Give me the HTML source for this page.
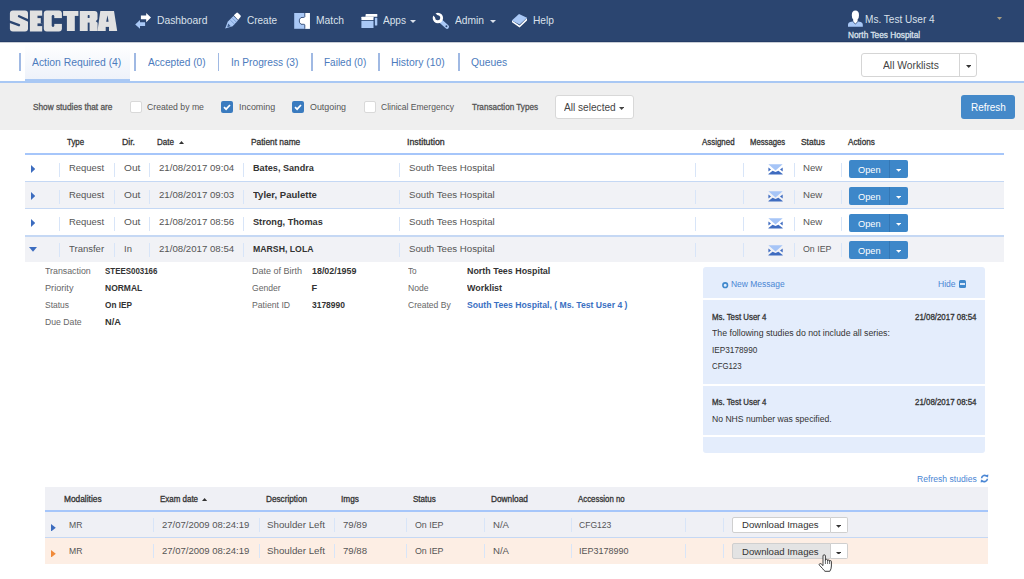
<!DOCTYPE html>
<html><head><meta charset="utf-8"><style>
html,body{margin:0;padding:0;width:1024px;height:579px;overflow:hidden;background:#fff;position:relative;font-family:"Liberation Sans",sans-serif}
div{position:absolute}
.t{white-space:nowrap;line-height:1}
</style></head><body>
<div style="left:0px;top:0px;width:1024px;height:41px;background:#2b4570"></div>
<div style="left:0px;top:41px;width:1024px;height:1px;background:#243b66"></div>
<div style="left:0px;top:42px;width:1024px;height:1px;background:#c9ced6"></div>
<svg style="position:absolute;left:0;top:0" width="130" height="42" viewBox="0 0 130 42"><rect x="9.9" y="10.5" width="18.1" height="21" rx="3" fill="#e1e1e1"/><path d="M19 16.2 L28.6 20.6" stroke="#2b4570" stroke-width="2.3" stroke-linecap="round"/><path d="M28.6 20.6 L30 21.2" stroke="#2b4570" stroke-width="2.3"/><path d="M19 25.2 L9.4 21.6" stroke="#2b4570" stroke-width="2.3" stroke-linecap="round"/><path d="M9.4 21.6 L8 21.1" stroke="#2b4570" stroke-width="2.3"/><rect x="29.9" y="10.5" width="12.3" height="21" fill="#e1e1e1"/><rect x="37.5" y="15.7" width="5" height="2.4" fill="#2b4570"/><rect x="37.5" y="23.4" width="5" height="2.7" fill="#2b4570"/><rect x="40.8" y="18" width="2" height="5.5" fill="#2b4570"/><rect x="43.8" y="10.5" width="18.1" height="21" rx="3" fill="#e1e1e1"/><rect x="51.7" y="15.1" width="2.6" height="11.8" rx="1.3" fill="#2b4570"/><rect x="53" y="18.1" width="9.5" height="5.8" fill="#2b4570"/><rect x="63.1" y="11" width="15.3" height="4.9" fill="#e1e1e1"/><rect x="66.9" y="11" width="7.9" height="20" fill="#e1e1e1"/><path d="M79.8 11 H94.5 Q97.5 11 97.5 14 V19.2 L95.8 21.2 L97.6 22.8 V31 H79.8 Z" fill="#e1e1e1"/><rect x="87.7" y="15.1" width="1.9" height="3" rx="0.6" fill="#2b4570"/><rect x="87.7" y="22.6" width="1.9" height="8.6" fill="#2b4570"/><path d="M100.3 11 H114 L117.2 31 H97.5 Z" fill="#e1e1e1"/><path d="M106.2 21.7 H108.6 L107.5 15.3 Z" fill="#2b4570"/><rect x="105.7" y="26.9" width="3.3" height="4.3" fill="#2b4570"/></svg>
<div class="t" style="left:157.3px;top:16px;font-size:10.3px;color:#dae1eb;font-weight:normal;transform:scaleX(1.0022);transform-origin:0 0;">Dashboard</div>
<div class="t" style="left:246.9px;top:16px;font-size:10.3px;color:#dae1eb;font-weight:normal;transform:scaleX(0.9704);transform-origin:0 0;">Create</div>
<div class="t" style="left:316px;top:16px;font-size:10.3px;color:#dae1eb;font-weight:normal;transform:scaleX(0.9983);transform-origin:0 0;">Match</div>
<div class="t" style="left:383px;top:16px;font-size:10.3px;color:#dae1eb;font-weight:normal;transform:scaleX(0.9797);transform-origin:0 0;">Apps</div>
<div class="t" style="left:455px;top:16px;font-size:10.3px;color:#dae1eb;font-weight:normal;transform:scaleX(0.9933);transform-origin:0 0;">Admin</div>
<div class="t" style="left:533px;top:16px;font-size:10.3px;color:#dae1eb;font-weight:normal;transform:scaleX(0.9913);transform-origin:0 0;">Help</div>
<svg style="position:absolute;left:410px;top:20px" width="6" height="3" viewBox="0 0 6 3"><path d="M0 0 L6 0 L3.0 3 Z" fill="#dae1eb"/></svg>
<svg style="position:absolute;left:489.5px;top:20px" width="6" height="3" viewBox="0 0 6 3"><path d="M0 0 L6 0 L3.0 3 Z" fill="#dae1eb"/></svg>
<svg style="position:absolute;left:132px;top:10px" width="24" height="22" viewBox="0 0 24 22"><path d="M8.9 5.5 H14.2 V3 L19 7.6 L14.2 12.2 V9.3 H8.9 Z" fill="#ffffff"/><path d="M13.1 12.2 H8 V9.9 L3.2 14.4 L8 18.8 V16 H13.1 Z" fill="#a9c8f6"/></svg>
<svg style="position:absolute;left:222px;top:10px" width="24" height="22" viewBox="0 0 24 22"><path d="M11.4 6.1 L16 10.4 L10.6 16.3 L3.2 18.6 L5.7 11.8 Z" fill="#a9c8f6"/><path d="M11.8 5.3 L14.6 2.8 Q15.3 2.3 16 2.9 L18.6 5.6 Q19.2 6.4 18.5 7.1 L16.1 10 Z" fill="#ffffff"/><path d="M8.3 10.1 L12.6 14.2 M10.4 8.2 L14.4 12.2" stroke="#5a7fb8" stroke-width="0.6"/><path d="M6.2 13.6 L8.8 16.2 L5.2 17.2 Z" fill="#3f5f90"/></svg>
<svg style="position:absolute;left:290px;top:10px" width="24" height="22" viewBox="0 0 24 22"><rect x="4.2" y="3" width="15.7" height="15.8" fill="#a9c8f6"/><path d="M14.8 3 H19.9 V18.8 H14.8 V14.8 Q14.5 14 13.2 14.3 Q10.5 15 9.6 12.6 Q9 11 9.6 9.2 Q10.5 6.8 13.2 7.4 Q14.5 7.6 14.8 6.8 Z" fill="#ffffff"/><path d="M14.8 3 V6.8 Q14.5 7.6 13.2 7.4 Q10.5 6.8 9.6 9.2 Q9 11 9.6 12.6 Q10.5 15 13.2 14.3 Q14.5 14 14.8 14.8 V18.8" stroke="#2b4570" stroke-width="0.9" fill="none"/></svg>
<svg style="position:absolute;left:357px;top:10px" width="24" height="22" viewBox="0 0 24 22"><path d="M8.8 4 H19.8 Q20.3 4 20.3 4.5 V6.8 H8.4 Z" fill="#ffffff"/><rect x="17.9" y="7.8" width="2.4" height="7.8" rx="0.6" fill="#a9c8f6"/><rect x="4.4" y="6.8" width="12.1" height="3.1" rx="0.5" fill="#ffffff"/><rect x="4.4" y="10.8" width="12.1" height="7.2" fill="#a9c8f6"/></svg>
<svg style="position:absolute;left:428px;top:10px" width="24" height="22" viewBox="0 0 24 22"><path d="M13.4 11.8 L19 16.8" stroke="#a9c8f6" stroke-width="4" stroke-linecap="round"/><circle cx="18.4" cy="16.2" r="0.95" fill="#2b4570"/><circle cx="9.9" cy="8" r="5.2" fill="#ffffff"/><circle cx="9.7" cy="7.8" r="2.5" fill="#2b4570"/><path d="M9.7 7.8 L5.2 3.2" stroke="#2b4570" stroke-width="3.2"/></svg>
<svg style="position:absolute;left:508px;top:10px" width="24" height="22" viewBox="0 0 24 22"><path d="M4 12.3 L11.6 17.6 L19 10.4 V8 L11.6 15.4 L4 10.6 Z" fill="#ffffff"/><path d="M3.8 10.4 L11 4 L19 7.8 L11.6 14.4 Z" fill="#a9c8f6"/></svg>
<svg style="position:absolute;left:844px;top:8px" width="24" height="22" viewBox="0 0 24 22"><path d="M4 18.8 V16.4 Q4 14.6 6 14 L8.6 13.4 L11.4 16.6 L14.2 13.4 L16.8 14 Q18.8 14.6 18.8 16.4 V18.8 Z" fill="#a9c8f6"/><path d="M11.4 2.6 Q15 2.6 15 7.2 Q15 10.4 13.6 11.6 V13.2 L11.4 15.8 L9.2 13.2 V11.6 Q7.8 10.4 7.8 7.2 Q7.8 2.6 11.4 2.6 Z" fill="#ffffff"/></svg>
<div class="t" style="left:865px;top:15px;font-size:10.3px;color:#dae1eb;font-weight:normal;transform:scaleX(0.9768);transform-origin:0 0;">Ms. Test User 4</div>
<div class="t" style="left:847.5px;top:32px;font-size:8.2px;color:#dae1eb;font-weight:normal;transform:scaleX(1.0111);transform-origin:0 0;-webkit-text-stroke:0.3px #dae1eb;">North Tees Hospital</div>
<svg style="position:absolute;left:997px;top:17px" width="5" height="3" viewBox="0 0 5 3"><path d="M0 0 L5 0 L2.5 3 Z" fill="#a89c80"/></svg>
<div style="left:25px;top:43px;width:105px;height:36px;background:linear-gradient(#fff,#eef2fa)"></div>
<div style="left:0px;top:81px;width:1024px;height:2px;background:#a9c8f4"></div>
<div style="left:25px;top:79px;width:105px;height:2px;background:#a9c8f4"></div>
<div class="t" style="left:32.3px;top:58px;font-size:10.4px;color:#4c7bbd;font-weight:normal;transform:scaleX(0.9978);transform-origin:0 0;">Action Required (4)</div>
<div class="t" style="left:147.6px;top:58px;font-size:10.4px;color:#4c7bbd;font-weight:normal;transform:scaleX(0.9769);transform-origin:0 0;">Accepted (0)</div>
<div class="t" style="left:230.6px;top:58px;font-size:10.4px;color:#4c7bbd;font-weight:normal;transform:scaleX(0.9800);transform-origin:0 0;">In Progress (3)</div>
<div class="t" style="left:323.7px;top:58px;font-size:10.4px;color:#4c7bbd;font-weight:normal;transform:scaleX(0.9630);transform-origin:0 0;">Failed (0)</div>
<div class="t" style="left:391.4px;top:58px;font-size:10.4px;color:#4c7bbd;font-weight:normal;transform:scaleX(1.0011);transform-origin:0 0;">History (10)</div>
<div class="t" style="left:470.7px;top:58px;font-size:10.4px;color:#4c7bbd;font-weight:normal;transform:scaleX(0.9938);transform-origin:0 0;">Queues</div>
<div style="left:19px;top:53px;width:1.6px;height:17.5px;background:#a0b9e3"></div>
<div style="left:134px;top:53px;width:1.6px;height:17.5px;background:#a0b9e3"></div>
<div style="left:217.5px;top:53px;width:1.6px;height:17.5px;background:#a0b9e3"></div>
<div style="left:311px;top:53px;width:1.6px;height:17.5px;background:#a0b9e3"></div>
<div style="left:378px;top:53px;width:1.6px;height:17.5px;background:#a0b9e3"></div>
<div style="left:458px;top:53px;width:1.6px;height:17.5px;background:#a0b9e3"></div>
<div style="left:861px;top:53px;width:116px;height:24px;background:#fff;border:1px solid #d5d5d5;border-radius:3px;box-sizing:border-box"></div>
<div style="left:959px;top:54px;width:1px;height:22px;background:#d5d5d5"></div>
<div class="t" style="left:882.6px;top:61px;font-size:10.3px;color:#444;font-weight:normal;transform:scaleX(0.9984);transform-origin:0 0;">All Worklists</div>
<svg style="position:absolute;left:965.5px;top:64.5px" width="5.5" height="3" viewBox="0 0 5.5 3"><path d="M0 0 L5.5 0 L2.75 3 Z" fill="#333"/></svg>
<div style="left:0px;top:83px;width:1024px;height:47px;background:#efefef"></div>
<div class="t" style="left:32.9px;top:103px;font-size:8.7px;color:#555;font-weight:normal;transform:scaleX(0.9502);transform-origin:0 0;-webkit-text-stroke:0.3px #555;">Show studies that are</div>
<div style="left:130px;top:101px;width:12px;height:12px;background:#fff;border:1px solid #d9d9d9;border-radius:2px;box-sizing:border-box"></div>
<div style="left:221px;top:101px;width:12px;height:12px;background:#3a7bbf;border-radius:2px"><svg width="12" height="12" viewBox="0 0 12 12" style="position:absolute;left:0;top:0"><path d="M3 6.2 L5.1 8.2 L9 4" stroke="#fff" stroke-width="1.7" fill="none"/></svg></div>
<div style="left:292px;top:101px;width:12px;height:12px;background:#3a7bbf;border-radius:2px"><svg width="12" height="12" viewBox="0 0 12 12" style="position:absolute;left:0;top:0"><path d="M3 6.2 L5.1 8.2 L9 4" stroke="#fff" stroke-width="1.7" fill="none"/></svg></div>
<div style="left:364px;top:101px;width:12px;height:12px;background:#fff;border:1px solid #d9d9d9;border-radius:2px;box-sizing:border-box"></div>
<div class="t" style="left:147.2px;top:102px;font-size:9.4px;color:#555;font-weight:normal;transform:scaleX(0.9262);transform-origin:0 0;">Created by me</div>
<div class="t" style="left:239.2px;top:102px;font-size:9.4px;color:#555;font-weight:normal;transform:scaleX(0.9517);transform-origin:0 0;">Incoming</div>
<div class="t" style="left:310.3px;top:102px;font-size:9.4px;color:#555;font-weight:normal;transform:scaleX(0.9462);transform-origin:0 0;">Outgoing</div>
<div class="t" style="left:381.4px;top:102px;font-size:9.4px;color:#555;font-weight:normal;transform:scaleX(0.9086);transform-origin:0 0;">Clinical Emergency</div>
<div class="t" style="left:471.9px;top:103px;font-size:8.7px;color:#555;font-weight:normal;transform:scaleX(0.9362);transform-origin:0 0;-webkit-text-stroke:0.3px #555;">Transaction Types</div>
<div style="left:555px;top:95px;width:79px;height:24px;background:#fff;border:1px solid #d8d8d8;border-radius:3px;box-sizing:border-box"></div>
<div class="t" style="left:564px;top:103px;font-size:10.3px;color:#444;font-weight:normal;transform:scaleX(0.9815);transform-origin:0 0;">All selected</div>
<svg style="position:absolute;left:619px;top:106.5px" width="5.3" height="3" viewBox="0 0 5.3 3"><path d="M0 0 L5.3 0 L2.65 3 Z" fill="#444"/></svg>
<div style="left:961px;top:95px;width:54px;height:24px;background:#4489c9;border-radius:3px"></div>
<div class="t" style="left:970.6px;top:103px;font-size:10.3px;color:#fff;font-weight:normal;transform:scaleX(0.9677);transform-origin:0 0;">Refresh</div>
<div class="t" style="left:67.2px;top:138px;font-size:8.7px;color:#333;font-weight:normal;transform:scaleX(0.9066);transform-origin:0 0;-webkit-text-stroke:0.3px #333;">Type</div>
<div class="t" style="left:122px;top:138px;font-size:8.7px;color:#333;font-weight:normal;transform:scaleX(0.9962);transform-origin:0 0;-webkit-text-stroke:0.3px #333;">Dir.</div>
<div class="t" style="left:156.8px;top:138px;font-size:8.7px;color:#333;font-weight:normal;transform:scaleX(0.9251);transform-origin:0 0;-webkit-text-stroke:0.3px #333;">Date</div>
<svg style="position:absolute;left:179px;top:141px" width="5" height="3" viewBox="0 0 5 3"><path d="M0 3 L2.5 0 L5 3 Z" fill="#333"/></svg>
<div class="t" style="left:250.7px;top:138px;font-size:8.7px;color:#333;font-weight:normal;transform:scaleX(0.9617);transform-origin:0 0;-webkit-text-stroke:0.3px #333;">Patient name</div>
<div class="t" style="left:407.2px;top:138px;font-size:8.7px;color:#333;font-weight:normal;transform:scaleX(1.0151);transform-origin:0 0;-webkit-text-stroke:0.3px #333;">Institution</div>
<div class="t" style="left:702.2px;top:138px;font-size:8.7px;color:#333;font-weight:normal;transform:scaleX(0.9109);transform-origin:0 0;-webkit-text-stroke:0.3px #333;">Assigned</div>
<div class="t" style="left:750.4px;top:138px;font-size:8.7px;color:#333;font-weight:normal;transform:scaleX(0.8877);transform-origin:0 0;-webkit-text-stroke:0.3px #333;">Messages</div>
<div class="t" style="left:800.5px;top:138px;font-size:8.7px;color:#333;font-weight:normal;transform:scaleX(0.9690);transform-origin:0 0;-webkit-text-stroke:0.3px #333;">Status</div>
<div class="t" style="left:848.3px;top:138px;font-size:8.7px;color:#333;font-weight:normal;transform:scaleX(0.9429);transform-origin:0 0;-webkit-text-stroke:0.3px #333;">Actions</div>
<div style="left:25px;top:153px;width:979px;height:2px;background:#a6c6fa"></div>
<div style="left:25px;top:155px;width:979px;height:26px;background:#fff"></div>
<div style="left:25px;top:181px;width:979px;height:1px;background:#c5d8f4"></div>
<svg style="position:absolute;left:31px;top:164.5px" width="4.2" height="8" viewBox="0 0 4.2 8"><path d="M0 0 L4.2 4.0 L0 8 Z" fill="#3c6cbf"/></svg>
<div style="left:59px;top:162.5px;width:1px;height:14px;background:#d8e5f8"></div>
<div style="left:114px;top:162.5px;width:1px;height:14px;background:#d8e5f8"></div>
<div style="left:149px;top:162.5px;width:1px;height:14px;background:#d8e5f8"></div>
<div style="left:243px;top:162.5px;width:1px;height:14px;background:#d8e5f8"></div>
<div style="left:399px;top:162.5px;width:1px;height:14px;background:#d8e5f8"></div>
<div style="left:695px;top:162.5px;width:1px;height:14px;background:#d8e5f8"></div>
<div style="left:742.5px;top:162.5px;width:1px;height:14px;background:#d8e5f8"></div>
<div style="left:793.5px;top:162.5px;width:1px;height:14px;background:#d8e5f8"></div>
<div style="left:841px;top:162.5px;width:1px;height:14px;background:#d8e5f8"></div>
<div class="t" style="left:68.75px;top:163px;font-size:9.6px;color:#555;font-weight:normal;transform:scaleX(0.9858);transform-origin:0 0;">Request</div>
<div class="t" style="left:123.6px;top:163px;font-size:9.6px;color:#555;font-weight:normal;transform:scaleX(1.0599);transform-origin:0 0;">Out</div>
<div class="t" style="left:158.6px;top:163px;font-size:9.6px;color:#555;font-weight:normal;transform:scaleX(1.0062);transform-origin:0 0;">21/08/2017 09:04</div>
<div class="t" style="left:252.9px;top:164px;font-size:9.2px;color:#333;font-weight:bold;transform:scaleX(0.9941);transform-origin:0 0;">Bates, Sandra</div>
<div class="t" style="left:408.75px;top:163px;font-size:9.6px;color:#555;font-weight:normal;transform:scaleX(1.0069);transform-origin:0 0;">South Tees Hospital</div>
<div class="t" style="left:802.8px;top:163px;font-size:9.6px;color:#555;font-weight:normal;transform:scaleX(1.0050);transform-origin:0 0;">New</div>
<svg style="position:absolute;left:767.5px;top:163.5px" width="15" height="11" viewBox="0 0 15 11"><path d="M0.4 0.2 H14.7 L7.5 6.4 Z" fill="#a6c5f7"/><path d="M0.4 3.5 L3 5.5 L0.4 7.4 Z M14.7 3.5 L12 5.5 L14.7 7.4 Z" fill="#3f6cc0"/><path d="M0.4 9.9 L4.6 6.75 L7.5 7.9 L10.4 6.75 L14.7 9.9 V10.6 H0.4 Z" fill="#3f6cc0"/></svg>
<div style="left:848.5px;top:159.5px;width:59px;height:18px;background:#3d87c9;border-radius:2px"></div>
<div style="left:889px;top:159.5px;width:1px;height:18px;background:#3477b5"></div>
<div class="t" style="left:857.8px;top:165px;font-size:9.6px;color:#fff;font-weight:normal;transform:scaleX(0.9623);transform-origin:0 0;">Open</div>
<svg style="position:absolute;left:896px;top:169.0px" width="5.3" height="2.8" viewBox="0 0 5.3 2.8"><path d="M0 0 L5.3 0 L2.65 2.8 Z" fill="#fff"/></svg>
<div style="left:25px;top:182px;width:979px;height:26px;background:#f1f2f6"></div>
<div style="left:25px;top:208px;width:979px;height:1px;background:#c5d8f4"></div>
<svg style="position:absolute;left:31px;top:191.5px" width="4.2" height="8" viewBox="0 0 4.2 8"><path d="M0 0 L4.2 4.0 L0 8 Z" fill="#3c6cbf"/></svg>
<div style="left:59px;top:189.5px;width:1px;height:14px;background:#d8e5f8"></div>
<div style="left:114px;top:189.5px;width:1px;height:14px;background:#d8e5f8"></div>
<div style="left:149px;top:189.5px;width:1px;height:14px;background:#d8e5f8"></div>
<div style="left:243px;top:189.5px;width:1px;height:14px;background:#d8e5f8"></div>
<div style="left:399px;top:189.5px;width:1px;height:14px;background:#d8e5f8"></div>
<div style="left:695px;top:189.5px;width:1px;height:14px;background:#d8e5f8"></div>
<div style="left:742.5px;top:189.5px;width:1px;height:14px;background:#d8e5f8"></div>
<div style="left:793.5px;top:189.5px;width:1px;height:14px;background:#d8e5f8"></div>
<div style="left:841px;top:189.5px;width:1px;height:14px;background:#d8e5f8"></div>
<div class="t" style="left:68.75px;top:190px;font-size:9.6px;color:#555;font-weight:normal;transform:scaleX(0.9858);transform-origin:0 0;">Request</div>
<div class="t" style="left:123.6px;top:190px;font-size:9.6px;color:#555;font-weight:normal;transform:scaleX(1.0599);transform-origin:0 0;">Out</div>
<div class="t" style="left:158.6px;top:190px;font-size:9.6px;color:#555;font-weight:normal;transform:scaleX(1.0062);transform-origin:0 0;">21/08/2017 09:03</div>
<div class="t" style="left:252.9px;top:191px;font-size:9.2px;color:#333;font-weight:bold;transform:scaleX(1.0373);transform-origin:0 0;">Tyler, Paulette</div>
<div class="t" style="left:408.75px;top:190px;font-size:9.6px;color:#555;font-weight:normal;transform:scaleX(1.0069);transform-origin:0 0;">South Tees Hospital</div>
<div class="t" style="left:802.8px;top:190px;font-size:9.6px;color:#555;font-weight:normal;transform:scaleX(1.0050);transform-origin:0 0;">New</div>
<svg style="position:absolute;left:767.5px;top:190.5px" width="15" height="11" viewBox="0 0 15 11"><path d="M0.4 0.2 H14.7 L7.5 6.4 Z" fill="#a6c5f7"/><path d="M0.4 3.5 L3 5.5 L0.4 7.4 Z M14.7 3.5 L12 5.5 L14.7 7.4 Z" fill="#3f6cc0"/><path d="M0.4 9.9 L4.6 6.75 L7.5 7.9 L10.4 6.75 L14.7 9.9 V10.6 H0.4 Z" fill="#3f6cc0"/></svg>
<div style="left:848.5px;top:186.5px;width:59px;height:18px;background:#3d87c9;border-radius:2px"></div>
<div style="left:889px;top:186.5px;width:1px;height:18px;background:#3477b5"></div>
<div class="t" style="left:857.8px;top:192px;font-size:9.6px;color:#fff;font-weight:normal;transform:scaleX(0.9623);transform-origin:0 0;">Open</div>
<svg style="position:absolute;left:896px;top:196.0px" width="5.3" height="2.8" viewBox="0 0 5.3 2.8"><path d="M0 0 L5.3 0 L2.65 2.8 Z" fill="#fff"/></svg>
<div style="left:25px;top:209px;width:979px;height:26px;background:#fff"></div>
<div style="left:25px;top:235px;width:979px;height:2px;background:#c5d8f4"></div>
<svg style="position:absolute;left:31px;top:218.5px" width="4.2" height="8" viewBox="0 0 4.2 8"><path d="M0 0 L4.2 4.0 L0 8 Z" fill="#3c6cbf"/></svg>
<div style="left:59px;top:216.5px;width:1px;height:14px;background:#d8e5f8"></div>
<div style="left:114px;top:216.5px;width:1px;height:14px;background:#d8e5f8"></div>
<div style="left:149px;top:216.5px;width:1px;height:14px;background:#d8e5f8"></div>
<div style="left:243px;top:216.5px;width:1px;height:14px;background:#d8e5f8"></div>
<div style="left:399px;top:216.5px;width:1px;height:14px;background:#d8e5f8"></div>
<div style="left:695px;top:216.5px;width:1px;height:14px;background:#d8e5f8"></div>
<div style="left:742.5px;top:216.5px;width:1px;height:14px;background:#d8e5f8"></div>
<div style="left:793.5px;top:216.5px;width:1px;height:14px;background:#d8e5f8"></div>
<div style="left:841px;top:216.5px;width:1px;height:14px;background:#d8e5f8"></div>
<div class="t" style="left:68.75px;top:217px;font-size:9.6px;color:#555;font-weight:normal;transform:scaleX(0.9858);transform-origin:0 0;">Request</div>
<div class="t" style="left:123.6px;top:217px;font-size:9.6px;color:#555;font-weight:normal;transform:scaleX(1.0599);transform-origin:0 0;">Out</div>
<div class="t" style="left:158.6px;top:217px;font-size:9.6px;color:#555;font-weight:normal;transform:scaleX(1.0062);transform-origin:0 0;">21/08/2017 08:56</div>
<div class="t" style="left:252.9px;top:218px;font-size:9.2px;color:#333;font-weight:bold;transform:scaleX(0.9982);transform-origin:0 0;">Strong, Thomas</div>
<div class="t" style="left:408.75px;top:217px;font-size:9.6px;color:#555;font-weight:normal;transform:scaleX(1.0069);transform-origin:0 0;">South Tees Hospital</div>
<div class="t" style="left:802.8px;top:217px;font-size:9.6px;color:#555;font-weight:normal;transform:scaleX(1.0050);transform-origin:0 0;">New</div>
<svg style="position:absolute;left:767.5px;top:217.5px" width="15" height="11" viewBox="0 0 15 11"><path d="M0.4 0.2 H14.7 L7.5 6.4 Z" fill="#a6c5f7"/><path d="M0.4 3.5 L3 5.5 L0.4 7.4 Z M14.7 3.5 L12 5.5 L14.7 7.4 Z" fill="#3f6cc0"/><path d="M0.4 9.9 L4.6 6.75 L7.5 7.9 L10.4 6.75 L14.7 9.9 V10.6 H0.4 Z" fill="#3f6cc0"/></svg>
<div style="left:848.5px;top:213.5px;width:59px;height:18px;background:#3d87c9;border-radius:2px"></div>
<div style="left:889px;top:213.5px;width:1px;height:18px;background:#3477b5"></div>
<div class="t" style="left:857.8px;top:219px;font-size:9.6px;color:#fff;font-weight:normal;transform:scaleX(0.9623);transform-origin:0 0;">Open</div>
<svg style="position:absolute;left:896px;top:223.0px" width="5.3" height="2.8" viewBox="0 0 5.3 2.8"><path d="M0 0 L5.3 0 L2.65 2.8 Z" fill="#fff"/></svg>
<div style="left:25px;top:237px;width:979px;height:25px;background:#f1f2f6"></div>
<svg style="position:absolute;left:29px;top:247px" width="8" height="4.8" viewBox="0 0 8 4.8"><path d="M0 0 L8 0 L4.0 4.8 Z" fill="#3c6cbf"/></svg>
<div style="left:59px;top:243px;width:1px;height:14px;background:#d8e5f8"></div>
<div style="left:114px;top:243px;width:1px;height:14px;background:#d8e5f8"></div>
<div style="left:149px;top:243px;width:1px;height:14px;background:#d8e5f8"></div>
<div style="left:243px;top:243px;width:1px;height:14px;background:#d8e5f8"></div>
<div style="left:399px;top:243px;width:1px;height:14px;background:#d8e5f8"></div>
<div style="left:695px;top:243px;width:1px;height:14px;background:#d8e5f8"></div>
<div style="left:742.5px;top:243px;width:1px;height:14px;background:#d8e5f8"></div>
<div style="left:793.5px;top:243px;width:1px;height:14px;background:#d8e5f8"></div>
<div style="left:841px;top:243px;width:1px;height:14px;background:#d8e5f8"></div>
<div class="t" style="left:69.2px;top:244px;font-size:9.6px;color:#555;font-weight:normal;transform:scaleX(0.9919);transform-origin:0 0;">Transfer</div>
<div class="t" style="left:123.6px;top:244px;font-size:9.6px;color:#555;font-weight:normal;transform:scaleX(0.9867);transform-origin:0 0;">In</div>
<div class="t" style="left:158.6px;top:244px;font-size:9.6px;color:#555;font-weight:normal;transform:scaleX(1.0062);transform-origin:0 0;">21/08/2017 08:54</div>
<div class="t" style="left:252.9px;top:245px;font-size:9.2px;color:#333;font-weight:bold;transform:scaleX(0.9486);transform-origin:0 0;">MARSH, LOLA</div>
<div class="t" style="left:408.75px;top:244px;font-size:9.6px;color:#555;font-weight:normal;transform:scaleX(1.0069);transform-origin:0 0;">South Tees Hospital</div>
<div class="t" style="left:802.8px;top:244px;font-size:9.6px;color:#555;font-weight:normal;transform:scaleX(0.9177);transform-origin:0 0;">On IEP</div>
<svg style="position:absolute;left:767.5px;top:244.5px" width="15" height="11" viewBox="0 0 15 11"><path d="M0.4 0.2 H14.7 L7.5 6.4 Z" fill="#a6c5f7"/><path d="M0.4 3.5 L3 5.5 L0.4 7.4 Z M14.7 3.5 L12 5.5 L14.7 7.4 Z" fill="#3f6cc0"/><path d="M0.4 9.9 L4.6 6.75 L7.5 7.9 L10.4 6.75 L14.7 9.9 V10.6 H0.4 Z" fill="#3f6cc0"/></svg>
<div style="left:848.5px;top:240.5px;width:59px;height:18px;background:#3d87c9;border-radius:2px"></div>
<div style="left:889px;top:240.5px;width:1px;height:18px;background:#3477b5"></div>
<div class="t" style="left:857.8px;top:246px;font-size:9.6px;color:#fff;font-weight:normal;transform:scaleX(0.9623);transform-origin:0 0;">Open</div>
<svg style="position:absolute;left:896px;top:250.0px" width="5.3" height="2.8" viewBox="0 0 5.3 2.8"><path d="M0 0 L5.3 0 L2.65 2.8 Z" fill="#fff"/></svg>
<div class="t" style="left:45.3px;top:267px;font-size:9.2px;color:#666;font-weight:normal;transform:scaleX(0.9597);transform-origin:0 0;">Transaction</div>
<div class="t" style="left:104.7px;top:267px;font-size:9.2px;color:#333;font-weight:bold;transform:scaleX(0.8626);transform-origin:0 0;">STEES003166</div>
<div class="t" style="left:45.3px;top:284px;font-size:9.2px;color:#666;font-weight:normal;transform:scaleX(0.9957);transform-origin:0 0;">Priority</div>
<div class="t" style="left:104.7px;top:284px;font-size:9.2px;color:#333;font-weight:bold;transform:scaleX(0.9239);transform-origin:0 0;">NORMAL</div>
<div class="t" style="left:45.3px;top:301px;font-size:9.2px;color:#666;font-weight:normal;transform:scaleX(0.9240);transform-origin:0 0;">Status</div>
<div class="t" style="left:104.7px;top:301px;font-size:9.2px;color:#333;font-weight:bold;transform:scaleX(0.8952);transform-origin:0 0;">On IEP</div>
<div class="t" style="left:45.3px;top:318px;font-size:9.2px;color:#666;font-weight:normal;transform:scaleX(0.9443);transform-origin:0 0;">Due Date</div>
<div class="t" style="left:104.7px;top:318px;font-size:9.2px;color:#333;font-weight:bold;transform:scaleX(1.0035);transform-origin:0 0;">N/A</div>
<div class="t" style="left:252px;top:267px;font-size:9.2px;color:#666;font-weight:normal;transform:scaleX(0.9798);transform-origin:0 0;">Date of Birth</div>
<div class="t" style="left:311.6px;top:267px;font-size:9.2px;color:#333;font-weight:bold;transform:scaleX(0.9664);transform-origin:0 0;">18/02/1959</div>
<div class="t" style="left:252px;top:284px;font-size:9.2px;color:#666;font-weight:normal;transform:scaleX(0.9353);transform-origin:0 0;">Gender</div>
<div class="t" style="left:311.6px;top:284px;font-size:9.2px;color:#333;font-weight:bold;">F</div>
<div class="t" style="left:252px;top:301px;font-size:9.2px;color:#666;font-weight:normal;transform:scaleX(0.9431);transform-origin:0 0;">Patient ID</div>
<div class="t" style="left:311.6px;top:301px;font-size:9.2px;color:#333;font-weight:bold;transform:scaleX(0.9214);transform-origin:0 0;">3178990</div>
<div class="t" style="left:408.2px;top:267px;font-size:9.2px;color:#666;font-weight:normal;transform:scaleX(0.8954);transform-origin:0 0;">To</div>
<div class="t" style="left:467.3px;top:267px;font-size:9.2px;color:#333;font-weight:bold;transform:scaleX(0.9673);transform-origin:0 0;">North Tees Hospital</div>
<div class="t" style="left:408.2px;top:284px;font-size:9.2px;color:#666;font-weight:normal;transform:scaleX(0.9366);transform-origin:0 0;">Node</div>
<div class="t" style="left:467.3px;top:284px;font-size:9.2px;color:#333;font-weight:bold;transform:scaleX(0.9716);transform-origin:0 0;">Worklist</div>
<div class="t" style="left:408.2px;top:301px;font-size:9.2px;color:#666;font-weight:normal;transform:scaleX(0.9278);transform-origin:0 0;">Created By</div>
<div class="t" style="left:467.3px;top:301px;font-size:9.2px;color:#3a70c2;font-weight:bold;transform:scaleX(0.9402);transform-origin:0 0;">South Tees Hospital, ( Ms. Test User 4 )</div>
<div style="left:703px;top:267px;width:282px;height:186px;background:#e4edfc;border-radius:3px"></div>
<div style="left:703px;top:297.5px;width:282px;height:2px;background:#fff"></div>
<div style="left:703px;top:384px;width:282px;height:2px;background:#fff"></div>
<div style="left:703px;top:434.5px;width:282px;height:2px;background:#fff"></div>
<svg style="position:absolute;left:722px;top:282px" width="6.5" height="6.5" viewBox="0 0 6.5 6.5"><circle cx="3.2" cy="3.2" r="2.3" stroke="#3f88cc" stroke-width="1.6" fill="none"/></svg>
<div class="t" style="left:730.7px;top:280px;font-size:9.2px;color:#4a86d4;font-weight:normal;transform:scaleX(0.9212);transform-origin:0 0;">New Message</div>
<div class="t" style="left:937.6px;top:280px;font-size:9.2px;color:#4a86d4;font-weight:normal;transform:scaleX(0.9302);transform-origin:0 0;">Hide</div>
<div style="left:958.7px;top:280px;width:7.4px;height:7.6px;background:#3f88cc;border-radius:1.5px"></div>
<div style="left:960.2px;top:283.2px;width:4.6px;height:1.4px;background:#d8e6f8"></div>
<div class="t" style="left:711.7px;top:314px;font-size:8.2px;color:#333;font-weight:normal;transform:scaleX(0.9594);transform-origin:0 0;-webkit-text-stroke:0.3px #333;">Ms. Test User 4</div>
<div class="t" style="left:915.3px;top:314px;font-size:8.2px;color:#333;font-weight:normal;transform:scaleX(0.9649);transform-origin:0 0;-webkit-text-stroke:0.3px #333;">21/08/2017 08:54</div>
<div class="t" style="left:711.7px;top:329px;font-size:9.2px;color:#333;font-weight:normal;transform:scaleX(0.9515);transform-origin:0 0;">The following studies do not include all series:</div>
<div class="t" style="left:711.7px;top:346px;font-size:9.2px;color:#333;font-weight:normal;transform:scaleX(0.8964);transform-origin:0 0;">IEP3178990</div>
<div class="t" style="left:711.7px;top:362px;font-size:9.2px;color:#333;font-weight:normal;transform:scaleX(0.8513);transform-origin:0 0;">CFG123</div>
<div class="t" style="left:711.7px;top:399px;font-size:8.2px;color:#333;font-weight:normal;transform:scaleX(0.9594);transform-origin:0 0;-webkit-text-stroke:0.3px #333;">Ms. Test User 4</div>
<div class="t" style="left:915.3px;top:399px;font-size:8.2px;color:#333;font-weight:normal;transform:scaleX(0.9649);transform-origin:0 0;-webkit-text-stroke:0.3px #333;">21/08/2017 08:54</div>
<div class="t" style="left:711.7px;top:415px;font-size:9.2px;color:#333;font-weight:normal;transform:scaleX(0.9372);transform-origin:0 0;">No NHS number was specified.</div>
<div class="t" style="left:917px;top:475px;font-size:9.2px;color:#4a86d4;font-weight:normal;transform:scaleX(0.9356);transform-origin:0 0;">Refresh studies</div>
<svg style="position:absolute;left:979.5px;top:474px" width="9" height="9" viewBox="0 0 9 9"><path d="M1.6 4.2 A3 3 0 0 1 7 2.6" stroke="#4a86d4" stroke-width="1.6" fill="none"/><path d="M7.4 4.8 A3 3 0 0 1 2 6.4" stroke="#4a86d4" stroke-width="1.6" fill="none"/><path d="M5.6 1.2 L8.4 0.6 L8 3.8 Z" fill="#4a86d4"/><path d="M3.4 7.8 L0.6 8.4 L1 5.2 Z" fill="#4a86d4"/></svg>
<div style="left:45px;top:487px;width:943px;height:23px;background:#eff0f5"></div>
<div style="left:45px;top:510px;width:943px;height:2px;background:#a6c6fa"></div>
<div class="t" style="left:64.3px;top:495px;font-size:8.7px;color:#333;font-weight:normal;transform:scaleX(0.9600);transform-origin:0 0;-webkit-text-stroke:0.3px #333;">Modalities</div>
<div class="t" style="left:159.5px;top:495px;font-size:8.7px;color:#333;font-weight:normal;transform:scaleX(0.9161);transform-origin:0 0;-webkit-text-stroke:0.3px #333;">Exam date</div>
<svg style="position:absolute;left:202px;top:498px" width="5.2" height="3" viewBox="0 0 5.2 3"><path d="M0 3 L2.6 0 L5.2 3 Z" fill="#333"/></svg>
<div class="t" style="left:266px;top:495px;font-size:8.7px;color:#333;font-weight:normal;transform:scaleX(0.9445);transform-origin:0 0;-webkit-text-stroke:0.3px #333;">Description</div>
<div class="t" style="left:341.4px;top:495px;font-size:8.7px;color:#333;font-weight:normal;transform:scaleX(0.9495);transform-origin:0 0;-webkit-text-stroke:0.3px #333;">Imgs</div>
<div class="t" style="left:413px;top:495px;font-size:8.7px;color:#333;font-weight:normal;transform:scaleX(0.9244);transform-origin:0 0;-webkit-text-stroke:0.3px #333;">Status</div>
<div class="t" style="left:491px;top:495px;font-size:8.7px;color:#333;font-weight:normal;transform:scaleX(0.9563);transform-origin:0 0;-webkit-text-stroke:0.3px #333;">Download</div>
<div class="t" style="left:577.5px;top:495px;font-size:8.7px;color:#333;font-weight:normal;transform:scaleX(0.9044);transform-origin:0 0;-webkit-text-stroke:0.3px #333;">Accession no</div>
<div style="left:45px;top:512px;width:943px;height:25px;background:#eff0f5"></div>
<div style="left:45px;top:537px;width:943px;height:1px;background:#c5d8f4"></div>
<svg style="position:absolute;left:51px;top:523.5px" width="4.8" height="7.6" viewBox="0 0 4.8 7.6"><path d="M0 0 L4.8 3.8 L0 7.6 Z" fill="#3c6cbf"/></svg>
<div style="left:152.5px;top:518px;width:1px;height:14px;background:#d8e5f8"></div>
<div style="left:258.5px;top:518px;width:1px;height:14px;background:#d8e5f8"></div>
<div style="left:333.5px;top:518px;width:1px;height:14px;background:#d8e5f8"></div>
<div style="left:406px;top:518px;width:1px;height:14px;background:#d8e5f8"></div>
<div style="left:484px;top:518px;width:1px;height:14px;background:#d8e5f8"></div>
<div style="left:570.5px;top:518px;width:1px;height:14px;background:#d8e5f8"></div>
<div style="left:684.5px;top:518px;width:1px;height:14px;background:#d8e5f8"></div>
<div style="left:722.5px;top:518px;width:1px;height:14px;background:#d8e5f8"></div>
<div class="t" style="left:68.6px;top:520px;font-size:9.6px;color:#555;font-weight:normal;transform:scaleX(0.8975);transform-origin:0 0;">MR</div>
<div class="t" style="left:161.5px;top:520px;font-size:9.6px;color:#555;font-weight:normal;transform:scaleX(0.9922);transform-origin:0 0;">27/07/2009 08:24:19</div>
<div class="t" style="left:267.1px;top:520px;font-size:9.6px;color:#555;font-weight:normal;transform:scaleX(1.0139);transform-origin:0 0;">Shoulder Left</div>
<div class="t" style="left:343.3px;top:520px;font-size:9.6px;color:#555;font-weight:normal;transform:scaleX(0.9990);transform-origin:0 0;">79/89</div>
<div class="t" style="left:414.9px;top:520px;font-size:9.6px;color:#555;font-weight:normal;transform:scaleX(0.9209);transform-origin:0 0;">On IEP</div>
<div class="t" style="left:493px;top:520px;font-size:9.6px;color:#555;font-weight:normal;transform:scaleX(0.9998);transform-origin:0 0;">N/A</div>
<div class="t" style="left:579.4px;top:520px;font-size:9.6px;color:#555;font-weight:normal;transform:scaleX(0.8930);transform-origin:0 0;">CFG123</div>
<div style="left:731.5px;top:516.7px;width:99px;height:16px;background:#fff;border:1px solid #cfcfcf;border-radius:2px 0 0 2px;box-sizing:border-box"></div>
<div style="left:830.5px;top:516.7px;width:17px;height:16px;background:#fff;border:1px solid #cfcfcf;border-left:0;border-radius:0 2px 2px 0;box-sizing:border-box"></div>
<div class="t" style="left:742px;top:520px;font-size:9.6px;color:#333;font-weight:normal;transform:scaleX(0.9968);transform-origin:0 0;">Download Images</div>
<svg style="position:absolute;left:836px;top:525.0px" width="5.2" height="2.8" viewBox="0 0 5.2 2.8"><path d="M0 0 L5.2 0 L2.6 2.8 Z" fill="#333"/></svg>
<div style="left:45px;top:538px;width:943px;height:26px;background:#fdeee4"></div>
<svg style="position:absolute;left:51px;top:549.5px" width="4.8" height="7.6" viewBox="0 0 4.8 7.6"><path d="M0 0 L4.8 3.8 L0 7.6 Z" fill="#f08a3a"/></svg>
<div style="left:152.5px;top:544px;width:1px;height:14px;background:#d8e5f8"></div>
<div style="left:258.5px;top:544px;width:1px;height:14px;background:#d8e5f8"></div>
<div style="left:333.5px;top:544px;width:1px;height:14px;background:#d8e5f8"></div>
<div style="left:406px;top:544px;width:1px;height:14px;background:#d8e5f8"></div>
<div style="left:484px;top:544px;width:1px;height:14px;background:#d8e5f8"></div>
<div style="left:570.5px;top:544px;width:1px;height:14px;background:#d8e5f8"></div>
<div style="left:684.5px;top:544px;width:1px;height:14px;background:#d8e5f8"></div>
<div style="left:722.5px;top:544px;width:1px;height:14px;background:#d8e5f8"></div>
<div class="t" style="left:68.6px;top:546px;font-size:9.6px;color:#555;font-weight:normal;transform:scaleX(0.8975);transform-origin:0 0;">MR</div>
<div class="t" style="left:161.5px;top:546px;font-size:9.6px;color:#555;font-weight:normal;transform:scaleX(0.9922);transform-origin:0 0;">27/07/2009 08:24:19</div>
<div class="t" style="left:267.1px;top:546px;font-size:9.6px;color:#555;font-weight:normal;transform:scaleX(1.0139);transform-origin:0 0;">Shoulder Left</div>
<div class="t" style="left:343.3px;top:546px;font-size:9.6px;color:#555;font-weight:normal;transform:scaleX(0.9990);transform-origin:0 0;">79/88</div>
<div class="t" style="left:414.9px;top:546px;font-size:9.6px;color:#555;font-weight:normal;transform:scaleX(0.9209);transform-origin:0 0;">On IEP</div>
<div class="t" style="left:493px;top:546px;font-size:9.6px;color:#555;font-weight:normal;transform:scaleX(0.9998);transform-origin:0 0;">N/A</div>
<div class="t" style="left:579.4px;top:546px;font-size:9.6px;color:#555;font-weight:normal;transform:scaleX(0.9367);transform-origin:0 0;">IEP3178990</div>
<div style="left:731.5px;top:543.4px;width:99px;height:16px;background:#e3e3e3;border:1px solid #cfcfcf;border-radius:2px 0 0 2px;box-sizing:border-box"></div>
<div style="left:830.5px;top:543.4px;width:17px;height:16px;background:#fff;border:1px solid #cfcfcf;border-left:0;border-radius:0 2px 2px 0;box-sizing:border-box"></div>
<div class="t" style="left:742px;top:547px;font-size:9.6px;color:#333;font-weight:normal;transform:scaleX(0.9968);transform-origin:0 0;">Download Images</div>
<svg style="position:absolute;left:836px;top:551.6999999999999px" width="5.2" height="2.8" viewBox="0 0 5.2 2.8"><path d="M0 0 L5.2 0 L2.6 2.8 Z" fill="#333"/></svg>
<svg style="position:absolute;left:817.5px;top:554px" width="15" height="19" viewBox="0 0 15 19"><path d="M5 9.5 V2 Q5 0.8 6.2 0.8 Q7.4 0.8 7.4 2 V6.5 Q7.4 5.3 8.5 5.3 Q9.6 5.3 9.6 6.5 V7 Q9.6 6 10.6 6 Q11.6 6 11.6 7 V7.5 Q11.6 6.6 12.5 6.6 Q13.4 6.6 13.4 7.6 V12 Q13.4 15 11.8 17.3 H7 Q6 16.6 4.5 14.5 L1.4 11.2 Q0.8 10.3 1.6 9.8 Q2.5 9.3 3.3 10 L5 11.6 Z" fill="#fff" stroke="#2a2a2a" stroke-width="0.9" stroke-linejoin="round"/><path d="M7.4 6.5 V10 M9.6 7 V10 M11.6 7.5 V10" stroke="#2a2a2a" stroke-width="0.7"/></svg>
</body></html>
